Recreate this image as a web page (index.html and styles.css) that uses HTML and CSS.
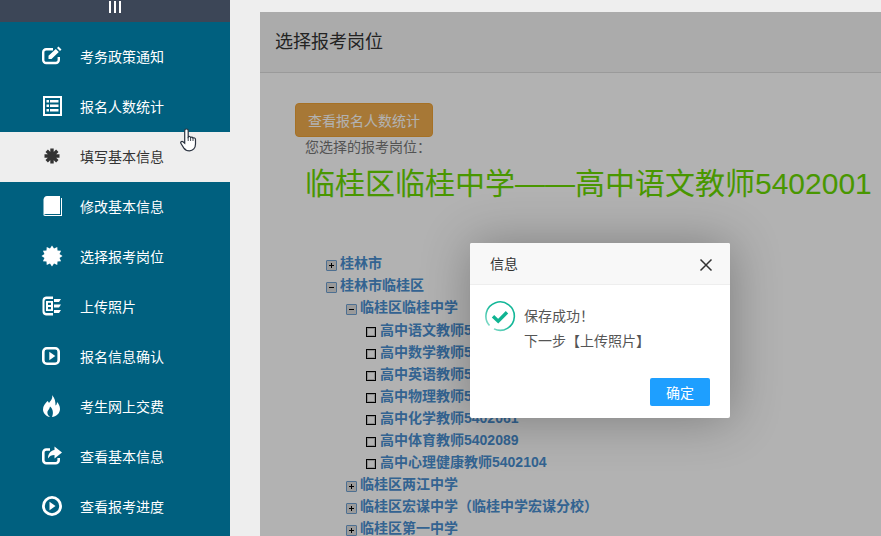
FILE: index.html
```html
<!DOCTYPE html>
<html lang="en">
<head>
    <meta charset="UTF-8">
    <title>选择报考岗位</title>
    <link rel="stylesheet" href="styles.css">
</head>
<body>
    <div class="side">
        <div class="side-top"><span class="bars"><i></i><i></i><i></i></span></div>
        <ul class="menu">
            <li><svg class="ico" viewBox="0 0 20 20"><path d="M16.800 11v3a3 3 0 0 1-3 3H4.200a3 3 0 0 1-3-3V6.200a3 3 0 0 1 3-3H11" fill="none" stroke="currentColor" stroke-width="2.400"/><path d="M6.500 9.800L13.800 3l3 3L9.500 13H6.500zM15 2l1.500-1.500 3 3L18 5z" fill="currentColor"/></svg>考务政策通知</li>
            <li><svg class="ico" viewBox="0 0 20 20"><path fill-rule="evenodd" d="M1 0h19v20H1zM3 2v16h15V2z" fill="currentColor"/><path d="M4.500 4h2.500v2.500H4.500zM8 4h8.500v2.500H8zM4.500 8.500h2.500v2.500H4.500zM8 8.500h8.500v2.500H8zM4.500 13h2.500v2.500H4.500zM8 13h8.500v2.500H8z" fill="currentColor"/></svg>报名人数统计</li>
            <li class="on"><svg class="ico" viewBox="0 0 20 20"><path d="M10 2.500v15M2.500 10h15M4.700 4.700l10.600 10.600M15.300 4.700L4.700 15.300" stroke="currentColor" stroke-width="3.400" fill="none"/></svg>填写基本信息</li>
            <li><svg class="ico" viewBox="0 0 20 20"><path d="M1.500 3.500C2 1.500 3 0 5 0h13v18H5c-1.500 0-2.500.2-3.500 1.500z" fill="currentColor"/><path d="M19 2h1v18H3c-1 0-1.500-.3-1.500-.5L3 19h16z" fill="currentColor"/></svg>修改基本信息</li>
            <li><svg class="ico" viewBox="0 0 20 20"><polygon fill="currentColor" points="10,-0.500 12.020,2.470 15.250,0.910 15.520,4.480 19.090,4.750 17.530,7.980 20.500,10 17.530,12.020 19.090,15.250 15.520,15.520 15.250,19.090 12.020,17.530 10,20.500 7.980,17.530 4.750,19.090 4.480,15.520 0.910,15.250 2.470,12.020 -0.500,10 2.470,7.980 0.910,4.750 4.480,4.480 4.750,0.910 7.980,2.470"/></svg>选择报考岗位</li>
            <li><svg class="ico" viewBox="0 0 20 20"><path d="M4 .5h7V3H4.500a2 2 0 0 0-2 2v10a2 2 0 0 0 2 2H11v2.500H4A4 4 0 0 1 .5 15.500v-11A4 4 0 0 1 4 .5z" fill="currentColor"/><path d="M4 5h7v10H4zM6 6.800v2.200h3V6.800zM6 11v2.200h3V11z" fill="currentColor" fill-rule="evenodd"/><path d="M12 3h7l-2 3h-5zM12 8.500h7l-2 3h-5zM12 14h7l-2 3h-5z" fill="currentColor"/></svg>上传照片</li>
            <li><svg class="ico" viewBox="0 0 20 20"><rect x="1.300" y="2.300" width="15.400" height="15.400" rx="3.500" fill="none" stroke="currentColor" stroke-width="2.600"/><path d="M7.300 5.700l6 4.300-6 4.300z" fill="currentColor"/></svg>报名信息确认</li>
            <li><svg class="ico" viewBox="0 0 20 20"><path d="M10 -1c1 3-1 5.500-3 8C6.500 6 6 5.500 5.500 5 3 8 1 10 1 13.500c0 4 3.500 7 7 7.500-2-1.500-3-3.500-2.500-5.500.5-1.500 2-2.500 2.500-5 2.500 2 4 6 2 10.500 4-.5 8-3.500 8-8 0-3-1.500-5.500-3-7 0 1.500-.5 3-1.500 3.500C13.500 6 13 2 10 -1z" fill="currentColor"/></svg>考生网上交费</li>
            <li><svg class="ico" viewBox="0 0 20 20"><path d="M16.700 12v2.200a3 3 0 0 1-3 3H4.300a3 3 0 0 1-3-3V6.500a3 3 0 0 1 3-3H8" fill="none" stroke="currentColor" stroke-width="2.600"/><path d="M12.500 0.500L20 6.500l-7.500 6V9C9.500 9 7.500 10 6 12.500 6 8 8.500 4.500 12.500 4z" fill="currentColor"/></svg>查看基本信息</li>
            <li><svg class="ico" viewBox="0 0 20 20"><circle cx="10" cy="10" r="8.600" fill="none" stroke="currentColor" stroke-width="2.800"/><path d="M7.500 5.700l6 4.300-6 4.300z" fill="currentColor"/></svg>查看报考进度</li>
        </ul>
    </div>

    <div class="main">
        <div class="panel">
            <div class="panel-head">选择报考岗位</div>
            <div class="panel-body">
                <button class="btn-warn">查看报名人数统计</button>
                <p class="chosen-label">您选择的报考岗位：</p>
                <h2 class="chosen">临桂区临桂中学——高中语文教师5402001</h2>

                <ul class="tree">
                    <li class="plus">桂林市</li>
                    <li class="minus">桂林市临桂区
                        <ul>
                            <li class="minus">临桂区临桂中学
                                <ul class="leaves">
                                    <li class="leaf">高中语文教师5402001</li>
                                    <li class="leaf">高中数学教师5402021</li>
                                    <li class="leaf">高中英语教师5402041</li>
                                    <li class="leaf">高中物理教师5402051</li>
                                    <li class="leaf">高中化学教师5402061</li>
                                    <li class="leaf">高中体育教师5402089</li>
                                    <li class="leaf">高中心理健康教师5402104</li>
                                </ul>
                            </li>
                            <li class="plus">临桂区两江中学</li>
                            <li class="plus">临桂区宏谋中学（临桂中学宏谋分校）</li>
                            <li class="plus">临桂区第一中学</li>
                        </ul>
                    </li>
                </ul>
            </div>
            <div class="shade"></div>
            <div class="dialog">
                <div class="dialog-title">信息
                    <svg class="close" viewBox="0 0 14 14"><path d="M1.500 1.500l11 11M12.500 1.500l-11 11" stroke="#333" stroke-width="1.500" fill="none"/></svg>
                </div>
                <div class="dialog-body">
                    <svg class="ok" viewBox="0 0 30 30">
                        <defs><linearGradient id="ring" x1="1" y1="0" x2="0" y2="1"><stop offset="0.500" stop-color="#14b798"/><stop offset="1" stop-color="#a5e6d8"/></linearGradient></defs>
                        <path d="M4.500 24.500A14.200 14.200 0 1 1 9 27.900" fill="none" stroke="url(#ring)" stroke-width="1.600"/>
                        <path d="M8 15.200l5.200 5 8.800-9" fill="none" stroke="#0fb492" stroke-width="3.400"/>
                    </svg>
                    <div class="msg">保存成功！<br>下一步【上传照片】</div>
                </div>
                <div class="dialog-foot"><button class="btn-ok">确定</button></div>
            </div>
        </div>
    </div>

    <svg class="hand" viewBox="0 0 17 24"><path d="M6.500 1c1 0 1.700.7 1.700 1.700V9c.8-.8 2-.7 2.400.4.800-.6 2-.4 2.400.7.900-.5 2.500-.2 2.500 1.400v4.500c0 4-2.500 6.900-6 6.900-3 0-4.500-1-5.800-3L1 15.500c-.9-1.300.6-2.800 2-1.800l1.700 1.500V2.700C4.700 1.700 5.500 1 6.500 1z" fill="#fff" stroke="#2b3340" stroke-width="1.200"/><path d="M8.200 9v4M10.600 9.400V13M13 10.100V13" stroke="#2b3340" stroke-width=".9" fill="none"/></svg>
</body>
</html>
```

FILE: styles.css
```css
* {
    box-sizing: border-box;
}

html, body {
    height: 100%;
    margin: 0;
    overflow: hidden;
}

body {
    display: flex;
    background-color: #eeeeee;
    color: #333;
    font-family: "Liberation Sans", "Noto Sans CJK SC", sans-serif;
    font-size: 14px;
}

ul {
    list-style: none;
    margin: 0;
    padding: 0;
}

/* left menu */
.side {
    flex: 0 0 230px;
    background-color: #00607f;
}

.side-top {
    height: 22px;
    background-color: #3c4657;
    display: flex;
    justify-content: center;
}

.bars {
    display: flex;
    gap: 3px;
    padding-top: 1px;
    height: 13px;
}

.bars i {
    display: block;
    width: 2px;
    height: 12px;
    background-color: #fff;
}

.menu {
    padding-top: 10px;
}

.menu li {
    height: 50px;
    display: flex;
    align-items: center;
    padding: 0 0 2px 42px;
    color: #fff;
    white-space: nowrap;
}

.menu li.on {
    background-color: #eeeeee;
    color: #333;
}

.ico {
    width: 20px;
    height: 20px;
    margin-right: 18px;
    flex: none;
    overflow: visible;
}

/* main panel */
.main {
    flex: 1;
    min-width: 0;
    padding: 12px 0 0 30px;
}

.panel {
    position: relative;
    height: 100%;
    background-color: #fff;
    overflow: hidden;
}

.panel-head {
    height: 61px;
    padding-left: 15px;
    line-height: 60px;
    font-size: 18px;
    background-color: #f5f5f5;
    border-bottom: 1px solid #ddd;
}

.panel-body {
    padding: 30px 0 0 35px;
}

.btn-warn {
    display: block;
    width: 138px;
    height: 34px;
    padding: 0;
    background-color: #f0ad4e;
    border: 1px solid #eea236;
    border-radius: 4px;
    color: #fff;
    font-family: inherit;
    font-size: 14px;
}

.chosen-label {
    margin: 0 0 0 10px;
    height: 20px;
    line-height: 20px;
    color: #777;
}

.chosen {
    margin: 0 0 0 10px;
    height: 54px;
    line-height: 54px;
    color: #69d900;
    font-size: 30px;
    font-weight: normal;
    white-space: nowrap;
}

.tree {
    margin-top: 41px;
    padding-left: 45px;
    color: #4a8fd0;
    font-weight: bold;
    line-height: 22px;
    white-space: nowrap;
}

.tree ul {
    padding-left: 20px;
}

.tree .leaves {
    margin-top: 1px;
}

.tree li {
    position: relative;
}

.tree li::before {
    content: "";
    position: absolute;
    left: -14px;
    top: 8px;
    width: 9px;
    height: 9px;
    border: 1px solid #6f9fd0;
    border-radius: 1px;
}

.tree .plus::before {
    background: linear-gradient(#000, #000) center / 5px 1px no-repeat,
        linear-gradient(#000, #000) center / 1px 5px no-repeat,
        #dddddd;
}

.tree .minus::before {
    background: linear-gradient(#000, #000) center / 5px 1px no-repeat, #dddddd;
}

.tree .leaf::before {
    width: 8px;
    height: 8px;
    border: 1px solid #000;
    border-radius: 0;
    box-shadow: inset 0 0 0 1px rgba(0, 0, 0, 0.2);
}

/* layer over the panel */
.shade {
    position: absolute;
    inset: 0;
    background-color: rgba(0, 0, 0, 0.3);
}

.dialog {
    position: absolute;
    left: 210px;
    top: 231px;
    width: 260px;
    height: 175px;
    background-color: #fff;
    border-radius: 2px;
    box-shadow: 1px 1px 50px rgba(0, 0, 0, 0.3);
}

.dialog-title {
    position: relative;
    height: 42px;
    padding-left: 20px;
    line-height: 42px;
    font-size: 14px;
    background-color: #f8f8f8;
    border-bottom: 1px solid #eee;
    border-radius: 2px 2px 0 0;
}

.close {
    position: absolute;
    right: 17px;
    top: 15px;
    width: 14px;
    height: 14px;
}

.dialog-body {
    display: flex;
    gap: 9px;
    padding: 16px 15px 0;
    height: 93px;
}

.ok {
    width: 30px;
    height: 30px;
    flex: none;
    overflow: visible;
}

.msg {
    padding-top: 3px;
    line-height: 25px;
    color: #555;
}

.dialog-foot {
    display: flex;
    justify-content: flex-end;
    padding-right: 20px;
}

.btn-ok {
    width: 60px;
    height: 28px;
    padding: 0;
    background-color: #1e9fff;
    border: none;
    border-radius: 2px;
    color: #fff;
    font-family: inherit;
    font-size: 14px;
}

.hand {
    position: absolute;
    left: 180px;
    top: 128px;
    width: 17px;
    height: 24px;
}
```
